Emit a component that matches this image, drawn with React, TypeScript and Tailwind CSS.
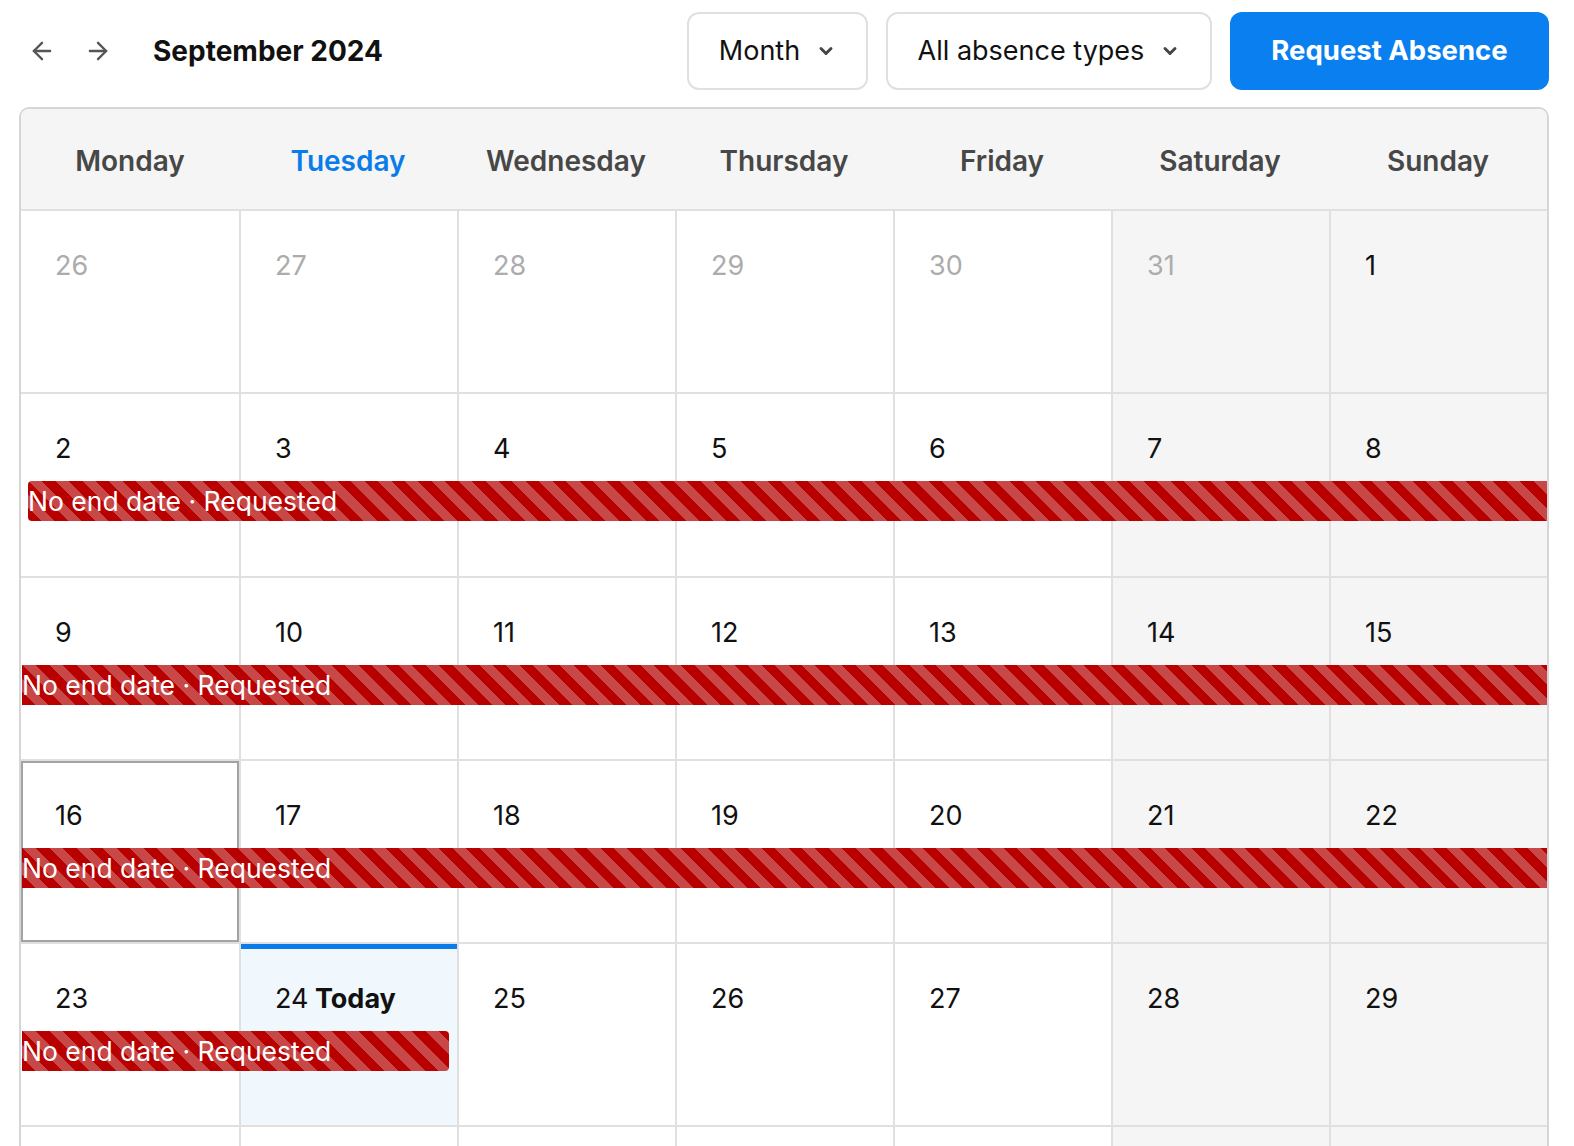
import { ArrowLeft, ArrowRight, ChevronDown } from "lucide-react";

type Day = {
  label?: number;
  muted?: boolean;
  today?: boolean;
  selected?: boolean;
};

type Absence = {
  start: number; // first column (1-based)
  span: number;
  continuesLeft: boolean;
  continuesRight: boolean;
};

type Week = {
  days: Day[];
  absence?: Absence;
};

const weekdays = [
  "Monday",
  "Tuesday",
  "Wednesday",
  "Thursday",
  "Friday",
  "Saturday",
  "Sunday",
];

const colStart = [
  "col-start-1",
  "col-start-2",
  "col-start-3",
  "col-start-4",
  "col-start-5",
  "col-start-6",
  "col-start-7",
];

const colSpan = [
  "col-span-1",
  "col-span-2",
  "col-span-3",
  "col-span-4",
  "col-span-5",
  "col-span-6",
  "col-span-7",
];

const range = (from: number, to: number) =>
  Array.from({ length: to - from + 1 }, (_, i) => from + i);

const weeks: Week[] = [
  {
    days: [
      ...range(26, 31).map((d) => ({ label: d, muted: true })),
      { label: 1 },
    ],
  },
  {
    days: range(2, 8).map((d) => ({ label: d })),
    absence: { start: 1, span: 7, continuesLeft: false, continuesRight: true },
  },
  {
    days: range(9, 15).map((d) => ({ label: d })),
    absence: { start: 1, span: 7, continuesLeft: true, continuesRight: true },
  },
  {
    days: range(16, 22).map((d) => ({ label: d, selected: d === 16 })),
    absence: { start: 1, span: 7, continuesLeft: true, continuesRight: true },
  },
  {
    days: range(23, 29).map((d) => ({ label: d, today: d === 24 })),
    absence: { start: 1, span: 2, continuesLeft: true, continuesRight: false },
  },
  // trailing week, scrolled below the fold
  { days: range(1, 7).map(() => ({})) },
];

const stripes =
  "bg-[repeating-linear-gradient(45deg,#b80000_0px,#b80000_9.5px,#c84848_9.5px,#c84848_19px)]";

function AbsenceBar({ absence }: { absence: Absence }) {
  return (
    <div
      className={[
        "row-start-2 z-10 flex h-[40px] items-center overflow-hidden text-[26.5px] leading-[40px] text-white",
        stripes,
        colStart[absence.start - 1],
        colSpan[absence.span - 1],
        absence.continuesLeft ? "ml-[1px]" : "ml-[7px] rounded-l-[4px]",
        absence.continuesRight ? "mr-0" : "mr-[8px] rounded-r-[4px]",
      ].join(" ")}
    >
      <span className="whitespace-nowrap">No end date · Requested</span>
    </div>
  );
}

function DayCell({ day, col }: { day: Day; col: number }) {
  const weekend = col >= 5;
  const bg = day.today
    ? "bg-[#f0f7fd] shadow-[inset_0_5px_0_#0a7cea]"
    : weekend
      ? "bg-[#f5f5f5]"
      : "bg-white";
  return (
    <div
      className={[
        "row-start-1 row-span-3 pl-[34px] pt-[39px]",
        colStart[col],
        col > 0 ? "border-l-2 border-[#e0e0e0]" : "",
        bg,
        day.selected ? "shadow-[inset_0_0_0_2px_#a3a3a3]" : "",
      ].join(" ")}
    >
      {day.label !== undefined && (
        <span
          className={`text-[27px] leading-[32px] ${
            day.muted ? "text-[#acacac]" : "text-[#111]"
          }`}
        >
          {day.label}
          {day.today && <span className="font-bold"> Today</span>}
        </span>
      )}
    </div>
  );
}

export default function App() {
  return (
    <div className="min-h-screen bg-white font-['Inter',sans-serif] text-[#111]">
      <div className="ml-[19px] w-[1530px] pt-[12px]">
        {/* toolbar */}
        <div className="flex h-[78px] items-center">
          <button className="ml-[9px] text-[#555]">
            <ArrowLeft size={28} strokeWidth={2} />
          </button>
          <button className="ml-[28px] text-[#555]">
            <ArrowRight size={28} strokeWidth={2} />
          </button>
          <h1 className="ml-[41px] text-[28px] font-bold">September 2024</h1>
          <div className="ml-auto flex h-full gap-[18px]">
            <button className="flex w-[181px] items-center justify-center gap-[16px] rounded-[12px] border-2 border-[#e0e0e0] bg-white text-[27px]">
              Month
              <ChevronDown size={20} strokeWidth={3.5} className="text-[#444]" />
            </button>
            <button className="flex w-[326px] items-center justify-center gap-[16px] rounded-[12px] border-2 border-[#e0e0e0] bg-white text-[27px]">
              All absence types
              <ChevronDown size={20} strokeWidth={3.5} className="text-[#444]" />
            </button>
            <button className="w-[319px] rounded-[12px] bg-[#0a7ff0] text-[27.5px] font-bold text-white">
              Request Absence
            </button>
          </div>
        </div>

        {/* calendar */}
        <div className="mt-[17px] overflow-hidden rounded-t-[10px] border-2 border-b-0 border-[#d6d6d6]">
          <div className="grid h-[100px] grid-cols-7 items-center bg-[#f5f5f5]">
            {weekdays.map((name) => (
              <div
                key={name}
                className={`pt-[4px] text-center text-[28px] font-semibold ${
                  name === "Tuesday" ? "text-[#0a7cea]" : "text-[#474747]"
                }`}
              >
                {name}
              </div>
            ))}
          </div>
          {weeks.map((week, wi) => (
            <div
              key={wi}
              className="grid h-[183.3px] grid-cols-7 grid-rows-[87px_40px_1fr] border-t-2 border-[#e0e0e0]"
            >
              {week.days.map((day, di) => (
                <DayCell key={di} day={day} col={di} />
              ))}
              {week.absence && <AbsenceBar absence={week.absence} />}
            </div>
          ))}
        </div>
      </div>
    </div>
  );
}
